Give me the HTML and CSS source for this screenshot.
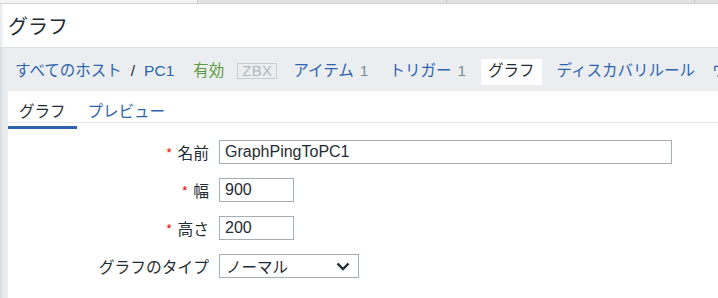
FILE: index.html
```html
<!DOCTYPE html>
<html lang="ja">
<head>
    <meta charset="UTF-8">
    <title>グラフ</title>
    <link rel="stylesheet" href="styles.css">
</head>
<body>
    <div class="topbar">
        <div class="top-cell first"></div>
        <div class="top-cell mid"></div>
        <div class="top-cell wide"></div>
        <div class="top-cell"></div>
    </div>
    <header class="header">
        <h1>グラフ</h1>
    </header>
    <div class="main">
        <ul class="nav">
            <li class="crumbs"><a href="#">すべてのホスト</a><span class="sep">/</span><a href="#">PC1</a></li>
            <li class="status">有効</li>
            <li class="zbx-item"><span class="zbx">ZBX</span></li>
            <li class="items"><a href="#">アイテム</a><span class="count">1</span></li>
            <li class="triggers"><a href="#">トリガー</a><span class="count">1</span></li>
            <li class="selected">グラフ</li>
            <li class="discovery"><a href="#">ディスカバリルール</a></li>
            <li class="web"><a href="#">ウェブ</a></li>
        </ul>
        <div class="panel">
            <ul class="tabs">
                <li class="active">グラフ</li>
                <li><a href="#">プレビュー</a></li>
            </ul>
            <form class="form">
                <div class="row">
                    <label class="required">名前</label>
                    <input type="text" class="name" value="GraphPingToPC1">
                </div>
                <div class="row">
                    <label class="required">幅</label>
                    <input type="text" class="small" value="900">
                </div>
                <div class="row">
                    <label class="required">高さ</label>
                    <input type="text" class="small" value="200">
                </div>
                <div class="row">
                    <label>グラフのタイプ</label>
                    <div class="select">
                        <span>ノーマル</span>
                        <svg width="14" height="9" viewBox="0 0 14 9"><path d="M1.5 1.5 L7 7 L12.5 1.5" fill="none" stroke="#1f2c33" stroke-width="2.4"/></svg>
                    </div>
                </div>
            </form>
        </div>
    </div>
</body>
</html>
```

FILE: styles.css
```css
*{
    margin: 0;
    padding: 0;
    box-sizing: border-box;
}
body{
    background-color: #ebeef0;
    font-family: "Liberation Sans", "Noto Sans CJK JP", sans-serif;
    font-size: 15.5px;
    color: #1f2c33;
    overflow: hidden;
}
a{
    color: #2f63ad;
    text-decoration: none;
}
ul{
    list-style: none;
}
.topbar{
    display: flex;
    height: 4px;
    background-color: #e2e2e2;
    border-bottom: 1px solid #d2d2d2;
}
.top-cell{
    width: 24px;
    border-left: 1px solid #c8c8c8;
}
.top-cell.first{
    width: 197px;
    border-left: none;
    background-color: #f3f3f3;
}
.top-cell.mid{
    width: 249px;
}
.top-cell.wide{
    width: 248px;
}
.header{
    height: 44px;
    background: linear-gradient(to right, #e4e6e8, #ffffff 4px);
    border-bottom: 1px solid #dcdfe1;
    padding-left: 8px;
    display: flex;
    align-items: center;
}
.header h1{
    font-size: 20px;
    font-weight: normal;
    color: #1f2c33;
}
.main{
    background: linear-gradient(to right, #d9dcdf, #ebeef0 4px);
    padding-left: 8px;
    height: 260px;
}
.nav{
    display: flex;
    align-items: center;
    height: 43px;
    padding-top: 11px;
    padding-bottom: 6px;
    white-space: nowrap;
    overflow: hidden;
}
.nav li{
    display: flex;
    align-items: center;
    height: 26px;
    line-height: 20px;
    padding-bottom: 2px;
}
.nav .crumbs{
    margin-left: 7px;
}
.sep{
    margin: 0 9px;
    color: #1f2c33;
}
.status{
    color: #5b9b41;
    margin-left: 19px;
}
.zbx-item{
    margin-left: 13px;
}
.zbx{
    font-size: 15px;
    color: #aeb8bf;
    border: 1px solid #c9ced3;
    padding: 0 4px;
    line-height: 14px;
    letter-spacing: 0.3px;
}
.items{
    margin-left: 16px;
}
.triggers{
    margin-left: 21px;
}
.count{
    color: #768d99;
    margin-left: 6px;
}
.nav .selected{
    background-color: #ffffff;
    padding: 0 7px 2px 7px;
    margin-left: 15px;
}
.discovery{
    margin-left: 15px;
}
.web{
    margin-left: 17px;
}
.panel{
    background-color: #ffffff;
    height: 220px;
}
.tabs{
    display: flex;
    height: 32px;
    border-bottom: 1px solid #e6e8ea;
}
.tabs li{
    position: relative;
    padding: 8px 11px 0 11px;
    height: 31px;
}
.tabs .active{
    color: #1f2c33;
}
.tabs .active::after{
    content: "";
    position: absolute;
    left: 0;
    right: 0;
    bottom: -7px;
    height: 3px;
    background-color: #2f63ad;
}
.form{
    padding-top: 17px;
}
.row{
    display: flex;
    align-items: center;
    margin-bottom: 14px;
}
.row label{
    width: 211px;
    text-align: right;
    padding-right: 10px;
    font-size: 15.75px;
}
.required::before{
    content: "*";
    color: #d40000;
    font-size: 13px;
    margin-right: 6px;
    vertical-align: 2px;
}
.row input{
    height: 24px;
    border: 1px solid #a3aeb6;
    font-family: "Liberation Sans", "Noto Sans CJK JP", sans-serif;
    font-size: 16px;
    color: #1f2c33;
    padding: 0 5px;
    outline: none;
}
.row input.name{
    width: 453px;
}
.row input.small{
    width: 75px;
}
.select{
    width: 140px;
    height: 24px;
    border: 1px solid #a3aeb6;
    display: flex;
    align-items: center;
    justify-content: space-between;
    padding: 0 8px 0 6px;
}
```
